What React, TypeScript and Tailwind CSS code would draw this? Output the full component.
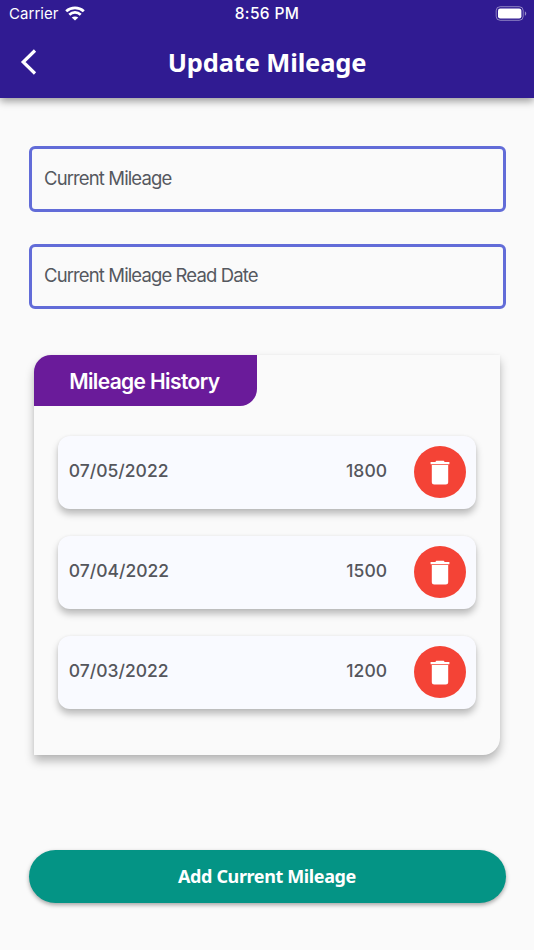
import * as React from "react"

const history = [
  { date: "07/05/2022", mileage: "1800" },
  { date: "07/04/2022", mileage: "1500" },
  { date: "07/03/2022", mileage: "1200" },
]

function StatusBar() {
  return (
    <div className="grid h-7 grid-cols-3 items-center pl-[9px] pr-[7px] text-[15px] font-['Inter',sans-serif]">
      <div className="flex items-center gap-1.5">
        <span className="tracking-[0.05px]">Carrier</span>
        <svg className="-mt-0.5" width="20" height="15" viewBox="0 0 20 15" fill="none" stroke="currentColor" strokeWidth="2.8">
          <path d="M1.2 5.2c5-4.5 12.6-4.5 17.6 0" />
          <path d="M4.3 8.7c3.3-3 8.1-3 11.4 0" />
          <path d="M10 14.6 6.7 11.6c1.8-1.6 4.8-1.6 6.6 0z" fill="currentColor" stroke="none" />
        </svg>
      </div>
      <span className="-ml-0.5 text-center text-[15.5px] font-medium tracking-[0.35px]">8:56 PM</span>
      <svg className="-mt-0.5 justify-self-end" width="32" height="15" viewBox="0 0 32 15" fill="none">
        <rect x="1.2" y="0.7" width="27" height="13.6" rx="4" stroke="white" strokeOpacity="0.45" />
        <rect x="3" y="2.6" width="23.4" height="9.8" rx="2.2" fill="white" />
        <path d="M29.9 5.2c1.8.8 1.8 3.8 0 4.6z" fill="white" fillOpacity="0.5" />
      </svg>
    </div>
  )
}

function Field({ label }: { label: string }) {
  return (
    <div className="flex h-[65.5px] items-center rounded-md border-3 border-[#626cd8] px-[12.5px] text-[18.5px] tracking-[-0.88px] text-[#55585f] font-['Inter',sans-serif]">
      {label}
    </div>
  )
}

function HistoryRow({ date, mileage }: { date: string; mileage: string }) {
  return (
    <div className="flex h-[73px] items-center rounded-xl bg-[#f9faff] pl-[11px] pr-[10.5px] text-[17.5px] font-medium text-[#55565c] shadow-[0_5px_7px_rgba(0,0,0,0.25),0_0_3px_rgba(0,0,0,0.06)] font-['Inter',sans-serif]">
      <span className="-mt-px">{date}</span>
      <span className="-mt-px ml-auto mr-[26.5px] tracking-[0.1px]">{mileage}</span>
      <button className="flex size-[52px] items-center justify-center rounded-full bg-[#f44336] text-white">
        <svg width="20" height="25" viewBox="0 0 20 25" fill="currentColor">
          <path d="M.6 2h4.7l1-1.2h7.4l1 1.2h4.7v2.3H.6z" />
          <path d="M1.8 5.1h16.4v17a2.5 2.5 0 0 1-2.5 2.5H4.3a2.5 2.5 0 0 1-2.5-2.5z" />
        </svg>
      </button>
    </div>
  )
}

export default function App() {
  return (
    <div className="flex h-[950px] w-[534px] flex-col bg-[#fafafa]">
      <header className="h-[98px] shrink-0 bg-[#301b92] text-white shadow-[0_3px_8px_rgba(0,0,0,0.4)]">
        <StatusBar />
        <div className="grid h-[68px] grid-cols-[60px_1fr_60px] items-center">
          <svg className="ml-5" width="18" height="28" viewBox="0 0 18 28" fill="none" stroke="currentColor" strokeWidth="3.2">
            <path d="M15 2.5 3.2 14 15 25.5" />
          </svg>
          <h1 className="text-center text-[25.5px] font-bold tracking-[-0.15px] font-['Noto_Sans',sans-serif]">Update Mileage</h1>
        </div>
      </header>

      <main className="flex flex-col px-[28.5px] pt-12">
        <div className="flex flex-col gap-8">
          <Field label="Current Mileage" />
          <Field label="Current Mileage Read Date" />
        </div>

        <section className="mx-[5.3px] mt-[46px] h-[400px] rounded-tl-[17px] rounded-br-[17px] bg-[#fafafa] shadow-[0_6px_10px_rgba(0,0,0,0.27),0_0_3px_rgba(0,0,0,0.05)]">
          <h2 className="flex h-[51px] w-[223px] items-center justify-center rounded-tl-[17px] rounded-br-[17px] bg-[#6a1b9a] pr-0.5 pt-0.5 text-[21px] font-semibold tracking-[-0.62px] text-white font-['Inter',sans-serif]">
            Mileage History
          </h2>
          <div className="flex flex-col gap-[27px] px-6 pt-[29.5px]">
            {history.map((item) => (
              <HistoryRow key={item.date} {...item} />
            ))}
          </div>
        </section>

        <button className="mt-[95px] h-[52.5px] rounded-full bg-[#049485] text-[18px] font-bold tracking-[-0.38px] text-white shadow-[0_2px_4px_rgba(0,0,0,0.35)] font-['Noto_Sans',sans-serif]">
          Add Current Mileage
        </button>
      </main>
    </div>
  )
}
